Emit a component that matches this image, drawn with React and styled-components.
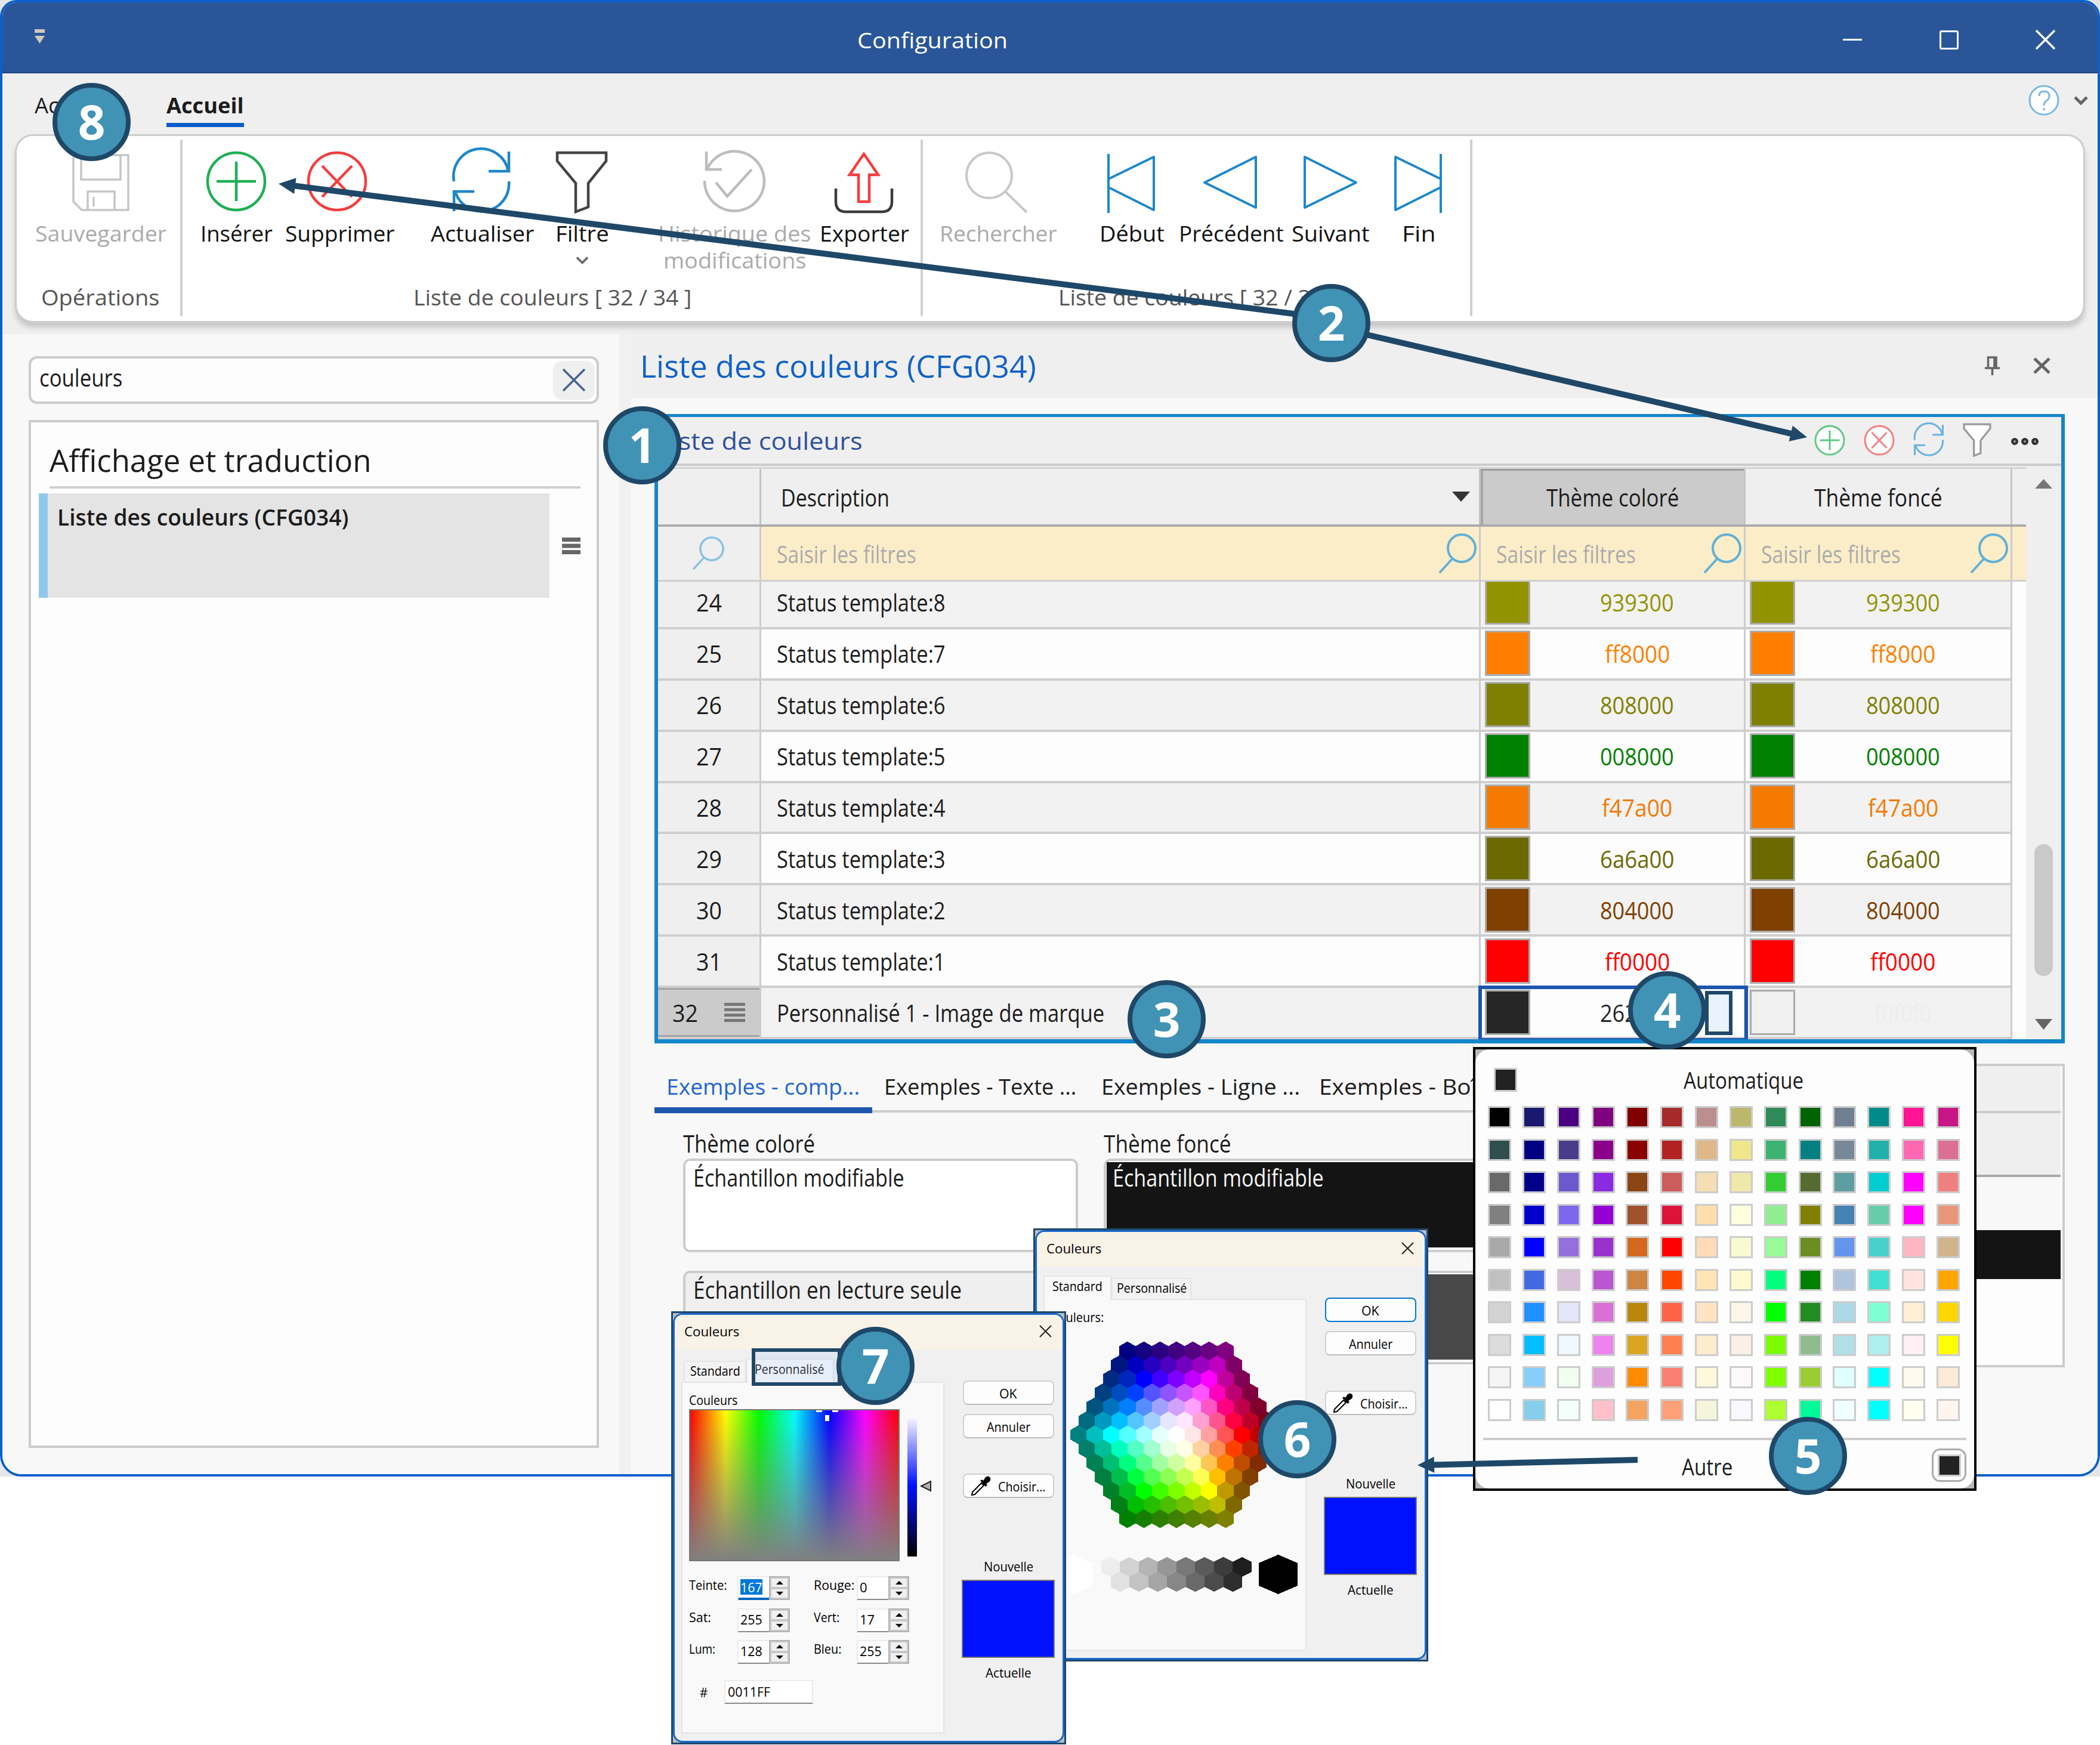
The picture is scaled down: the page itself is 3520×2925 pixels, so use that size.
import React, { useLayoutEffect, useRef, useState } from 'react';
import styled, { createGlobalStyle, css } from 'styled-components';

const GlobalStyle = createGlobalStyle`
  * { box-sizing: border-box; }
  html, body { margin: 0; padding: 0; background: #fff; }
  body { font-family: 'Open Sans', 'Noto Sans', sans-serif; font-size: 36.5px; color: #1c1c1c; }
  svg { display: block; flex: none; overflow: visible; }
`;

const FitBox = styled.span`
  display: inline-block;
  flex: none;
  white-space: nowrap;
`;

const FitInner = styled.span`
  display: inline-block;
  transform-origin: 0 50%;
`;

// Condenses a label so that it takes exactly the given width
const Fit = ({ w, children }) => {
  const ref = useRef(null);
  const [scale, setScale] = useState(1);
  useLayoutEffect(() => {
    setScale(w / ref.current.offsetWidth);
  }, [w, children]);
  return (
    <FitBox style={{ width: w }}>
      <FitInner ref={ref} style={{ transform: `scaleX(${scale})` }}>{children}</FitInner>
    </FitBox>
  );
};

const Page = styled.div`
  position: relative;
  width: 3520px;
  height: 2925px;
  overflow: hidden;
  background: #fff;
`;

const Backdrop = styled.div`
  height: 2475px;
  background: #e6e6e6;
`;

const Window = styled.div`
  display: flex;
  flex-direction: column;
  width: 3520px;
  height: 2475px;
  border: 4px solid #0a60cc;
  border-radius: 28px 28px 36px 36px;
  overflow: hidden;
  background: #efefef;
`;

/* ---------- title bar ---------- */

const TitleBar = styled.div`
  display: flex;
  align-items: center;
  height: 119px;
  flex: none;
  padding: 9px 72px 0 54px;
  background: #2a5699;
  color: #fff;
  border-bottom: 3px solid #22498a;
`;

const QuickAccess = styled.div`
  padding-bottom: 10px;
`;

const TitleText = styled.div`
  flex: 1;
  padding-left: 1361px;
  font-size: 37px;
  line-height: 50px;
`;

const WindowButtons = styled.div`
  display: flex;
  align-items: center;
  gap: 130px;
`;

const MenuTabs = styled.div`
  display: flex;
  height: 102px;
  flex: none;
  padding: 28px 17px 0 54px;
`;

const MenuTab = styled.div`
  height: 62px;
  line-height: 50px;
  margin-right: ${({ gap }) => gap || 0}px;
  ${({ active }) => active && css`
    font-weight: 700;
    border-bottom: 7px solid #0a5cc8;
  `}
`;

const HelpArea = styled.div`
  display: flex;
  align-items: center;
  gap: 25px;
  height: 33px;
  margin-left: auto;
`;

/* ---------- ribbon ---------- */

const Ribbon = styled.div`
  display: flex;
  height: 316px;
  flex: none;
  margin: 0 21px;
  background: #fff;
  border: 3px solid #cdcdcd;
  border-radius: 30px;
  box-shadow: 0 8px 8px #c8c8c8;
`;

const RibbonGroup = styled.div`
  display: flex;
  flex-direction: column;
  width: ${({ w }) => w}px;
  margin: 6px 0 8px;
  padding: 20px 0 9px;
  border-right: 4px solid #d0d0d0;
`;

const RibbonRow = styled.div`
  display: flex;
`;

const RibbonButton = styled.div`
  display: flex;
  flex-direction: column;
  align-items: center;
  width: ${({ w }) => w}px;
  margin-left: ${({ ml }) => ml}px;
  line-height: 45px;
  color: ${({ off }) => (off ? '#ababab' : '#111')};
`;

const RibbonIcon = styled.div`
  height: 115px;
  margin-left: ${({ shift }) => shift || 0}px;
`;

const RibbonCaption = styled.div`
  margin-top: auto;
  padding-left: ${({ pl }) => pl}px;
  line-height: 45px;
  color: #555;
`;

const FilterArrow = styled.div`
  margin-top: 16px;
`;

/* ---------- left pane ---------- */

const Workspace = styled.div`
  display: flex;
  flex: 1;
  margin-top: 19px;
`;

const SidePane = styled.div`
  display: flex;
  flex-direction: column;
  width: 1034px;
  padding: 37px 34px 0 44px;
  background: #f8f8f8;
`;

const SearchField = styled.div`
  display: flex;
  align-items: center;
  justify-content: space-between;
  height: 80px;
  padding: 0 3px 0 14px;
  font-size: 40px;
  background: #fdfdfd;
  border: 4px solid #ccc;
  border-radius: 14px;
`;

const SearchValue = styled.div`
  line-height: 50px;
  padding-bottom: 8px;
`;

const ClearButton = styled.div`
  display: flex;
  align-items: center;
  justify-content: center;
  width: 70px;
  height: 65px;
  border-radius: 16px;
  background: #efefef;
`;

const Tree = styled.div`
  height: 1723px;
  margin-top: 27px;
  padding: 29px 27px 0 13px;
  background: #fdfdfd;
  border: 4px solid #ccc;
`;

const TreeTitle = styled.div`
  margin-left: 18px;
  height: 82px;
  padding-top: 3px;
  font-size: 51px;
  line-height: 62px;
  border-bottom: 4px solid #cfcfcf;
`;

const TreeRow = styled.div`
  display: flex;
  align-items: center;
  justify-content: space-between;
  margin-top: 8px;
`;

const TreeItem = styled.div`
  width: 856px;
  height: 175px;
  padding: 14px 0 0 16px;
  font-size: 38px;
  font-weight: 600;
  line-height: 50px;
  background: #e4e4e4;
  border-left: 15px solid #90c8ec;
`;

const Splitter = styled.div`
  width: 20px;
  background: #f1f1f1;
`;

/* ---------- main pane ---------- */

const MainPane = styled.div`
  display: flex;
  flex-direction: column;
  flex: 1;
  background: #f8f8f8;
`;

const PaneHeader = styled.div`
  display: flex;
  align-items: center;
  height: 107px;
  padding: 0 81px 2px 15px;
  background: #efefef;
  color: #1062c8;
  font-size: 51px;
  line-height: 70px;
`;

const PaneTools = styled.div`
  display: flex;
  align-items: center;
  gap: 58px;
  margin-left: auto;
`;

const GridFrame = styled.div`
  width: 2364px;
  height: 1055px;
  margin: 27px 0 0 39px;
  background: #efefef;
  border: solid #1485cc;
  border-width: 5px 6px 7px 6px;
`;

const GridCaption = styled.div`
  display: flex;
  align-items: center;
  height: 82px;
  padding: 0 39px 0 1px;
  color: #2f519c;
  font-size: 41px;
  line-height: 56px;
  border-bottom: 4px solid #ccc;
`;

const GridTools = styled.div`
  display: flex;
  align-items: center;
  gap: 33px;
  margin-left: auto;
`;

const GridBody = styled.div`
  display: flex;
  height: 961px;
`;

const Sheet = styled.div`
  display: flex;
  flex-direction: column;
  width: 2293px;
  padding-top: 2px;
  font-size: 41px;
`;

const line = css`
  display: grid;
  grid-template-columns: 173px 1206px 444px 447px 23px;
`;

const HeadLine = styled.div`
  ${line}
  height: 100px;
  border-top: 3px solid #d4d4d4;
  border-bottom: 4px solid #acacac;
`;

const HeadCell = styled.div`
  display: flex;
  align-items: center;
  justify-content: ${({ spread }) => (spread ? 'space-between' : 'center')};
  padding: ${({ spread }) => (spread ? '0 15px 0 33px' : '0')};
  border-right: 3px solid #c4c4c4;
  background: ${({ active }) => (active ? '#cbcbcb' : '#efefef')};
  box-shadow: ${({ active }) => (active ? 'inset 0 3px #9a9a9a, inset 4px 0 #a4a4a4' : 'none')};
`;

const FilterLine = styled.div`
  ${line}
  height: 92px;
  border-bottom: 3px solid #cfcfcf;
  background: #fcedc9;
`;

const FilterCell = styled.div`
  display: flex;
  align-items: center;
  justify-content: space-between;
  padding: 0 3px 0 26px;
  color: #ababab;
  border-right: 3px solid #ccc;
`;

const FilterIndex = styled.div`
  display: flex;
  align-items: center;
  justify-content: center;
  background: #efefef;
  border-right: 3px solid #ccc;
`;

const Rows = styled.div`
  display: flex;
  flex-direction: column;
  justify-content: flex-end;
  height: 767px;
  overflow: hidden;
`;

const Row = styled.div`
  ${line}
  height: 85.9px;
  flex: none;
  background: ${({ alt }) => (alt ? '#f2f2f2' : '#fdfdfd')};
`;

const Cell = styled.div`
  display: flex;
  align-items: center;
  padding-left: ${({ pl }) => pl || 0}px;
  padding-bottom: 1px;
  border-right: 3px solid #ccc;
  border-bottom: 4px solid #cfcfcf;
`;

const IndexCell = styled(Cell)`
  justify-content: center;
  gap: 44px;
  background: ${({ active }) => (active ? '#cbcbcb' : '#efefef')};
  box-shadow: ${({ active }) => (active ? 'inset 0 3px #a4a4a4, inset 0 -3px #a4a4a4' : 'none')};
`;

const ColorCell = styled(Cell)`
  padding-left: 7px;
  color: ${({ ink }) => ink};
  ${({ editing }) => editing && css`
    position: relative;
    background: #fdfdfd;
    outline: 6px solid #1c56ae;
    outline-offset: -2px;
  `}
`;

const ColorSwatch = styled.div`
  width: 76px;
  height: 76px;
  flex: none;
  background: ${({ fill }) => fill};
  border: 3px solid #ababab;
`;

const ColorCode = styled.div`
  display: flex;
  flex: 1;
  justify-content: center;
`;

const RowGap = styled.div`
  background: #fdfdfd;
`;

const ScrollBar = styled.div`
  display: flex;
  flex-direction: column;
  align-items: center;
  flex: 1;
  padding: 22px 0 16px;
  background: #efefef;
`;

const Thumb = styled.div`
  width: 31px;
  height: 221px;
  margin: auto 0 72px;
  border-radius: 16px;
  background: #c9c9c9;
`;

/* ---------- samples ---------- */

const Bottom = styled.div`
  display: flex;
  margin-left: 39px;
`;

const Samples = styled.div`
  width: 1403px;
`;

const SampleTabs = styled.div`
  display: flex;
  height: 117px;
  padding-top: 47px;
  background: linear-gradient(#ccc, #ccc) 0 112px / 100% 4px no-repeat;
`;

const SampleTab = styled.div`
  width: 364.5px;
  flex: none;
  padding-left: 20px;
  line-height: 50px;
  white-space: nowrap;
  ${({ active }) => active && css`
    color: #1f66d0;
    border-bottom: 10px solid #1f57ab;
  `}
`;

const SampleColumns = styled.div`
  display: flex;
  gap: 43px;
  padding: 28px 0 0 48px;
  font-size: 40px;
`;

const SampleColumn = styled.div`
  width: 662px;
  flex: none;
`;

const SampleLabel = styled.div`
  height: 48px;
  line-height: 45px;
`;

const SampleArea = styled.div`
  height: 157px;
  margin-bottom: 31px;
  padding: ${({ dark }) => (dark ? '2px 1px 4px' : '0')};
  border: 4px solid #ccc;
  border-radius: 12px;
  background: #fff;
`;

const SampleText = styled.div`
  height: 100%;
  padding: ${({ dark }) => (dark ? '1px 10px' : '3px 13px')};
  line-height: 50px;
  color: ${({ dark }) => (dark ? '#f4f4f4' : '#1c1c1c')};
  background: ${({ fill }) => fill};
  border-radius: ${({ dark }) => (dark ? 0 : 8)}px;
`;

const PreviewBox = styled.div`
  flex: none;
  width: 961px;
  height: 509px;
  margin-top: 34px;
  padding-right: 3px;
  border: 4px solid #ccc;
  background: #fdfdfd;
`;

const PreviewBand = styled.div`
  height: ${({ h }) => h}px;
  background: ${({ fill }) => fill};
  border-bottom: ${({ rule }) => (rule ? `4px solid ${rule}` : 'none')};
`;

/* ---------- colour popup ---------- */

const Popup = styled.div`
  position: absolute;
  left: 2469px;
  top: 1755px;
  width: 844px;
  height: 744px;
  border: 4px solid #000;
  background: #b9b9b9;
`;

const PopupBody = styled.div`
  height: 100%;
  padding: 30px 13px 0;
  border-radius: 24px;
  background: #fdfdfd;
  font-size: 39px;
`;

const PopupAuto = styled.div`
  display: flex;
  align-items: center;
  height: 42px;
  padding-left: 18px;
  margin-bottom: 23px;
  gap: 279px;
  line-height: 42px;
`;

const Chip = styled.div`
  width: 39px;
  height: ${({ h }) => h || 37}px;
  background: ${({ fill }) => fill};
  border: 3px solid #ccc;
`;

const ChipGrid = styled.div`
  display: grid;
  grid-template-columns: repeat(14, 39px);
  grid-auto-rows: 37px;
  column-gap: 18.85px;
  row-gap: 17.5px;
  padding-left: 8px;
`;

const PopupOther = styled.div`
  display: flex;
  align-items: center;
  justify-content: space-between;
  height: 95px;
  margin-top: 28px;
  padding: 0 0 6px 333px;
  border-top: 4px solid #ccc;
`;

const OtherText = styled.div`
  padding-top: 2px;
`;

const OtherButton = styled.div`
  display: flex;
  align-items: center;
  justify-content: center;
  width: 58px;
  height: 56px;
  border: 3px solid #ababab;
  border-radius: 14px;
`;

/* ---------- colour dialogs ---------- */

const DialogFrame = styled.div`
  position: absolute;
  left: ${({ x }) => x}px;
  top: ${({ y }) => y}px;
  width: 662px;
  height: 726px;
  border: 3px solid #1f4868;
  background: #b9bec4;
  font-size: 22px;
  line-height: 28px;
  color: #000;
`;

const Dialog = styled.div`
  display: flex;
  flex-direction: column;
  height: 100%;
  border: 3px solid #1a68cc;
  border-radius: 16px;
  overflow: hidden;
  background: #f0f0f0;
`;

const DialogTitle = styled.div`
  display: flex;
  align-items: center;
  justify-content: space-between;
  height: 58px;
  flex: none;
  padding: 0 19px 4px 16px;
  background: #f9f2e6;
`;

const DialogBody = styled.div`
  display: flex;
`;

const TabSide = styled.div`
  width: 441px;
  margin-left: 11px;
`;

const DialogTabs = styled.div`
  display: flex;
  align-items: flex-end;
  height: 54px;
  padding-left: ${({ pl }) => pl || 0}px;
`;

const DialogTab = styled.div`
  width: ${({ w }) => w}px;
  height: ${({ active }) => (active ? 41 : 35)}px;
  padding-top: ${({ active }) => (active ? 1 : 0)}px;
  padding-left: ${({ pl }) => pl}px;
  background: ${({ active }) => (active ? '#f9f9f9' : '#f3f3f3')};
  border: 2px solid #e5e5e5;
  border-bottom: none;
  margin-bottom: ${({ active }) => (active ? -2 : 0)}px;
  position: relative;
`;

const TabPage = styled.div`
  height: 590px;
  padding: 14px 13px 0 11px;
  background: #f9f9f9;
  border: 2px solid #e5e5e5;
`;

const WheelArea = styled.div`
  padding-top: 7px;
`;

const ActionSide = styled.div`
  display: flex;
  flex-direction: column;
  align-items: center;
  width: 158px;
  margin-left: 28px;
  padding-top: 52px;
`;

const DialogButton = styled.div`
  display: flex;
  align-items: center;
  justify-content: center;
  gap: 12px;
  width: 153px;
  height: 41px;
  margin-bottom: ${({ mb }) => mb}px;
  background: #fdfdfd;
  border: 2px solid ${({ primary }) => (primary ? '#0078d4' : '#d0d0d0')};
  border-bottom-color: ${({ primary }) => (primary ? '#0078d4' : '#bdbdbd')};
  border-radius: 8px;
`;

const NewColor = styled.div`
  width: 156px;
  height: 131px;
  margin: 9px 0 10px;
  background: #0011ff;
  border: 2px solid #7c7c70;
`;

const Spectrum = styled.div`
  width: 353px;
  height: 255px;
  border: 2px solid #777;
  background:
    linear-gradient(rgba(128, 128, 128, 0), rgb(128, 128, 128)),
    linear-gradient(to right, #f00, #ff0 17%, #0f0 33%, #0ff 50%, #00f 67%, #f0f 84%, #f00);
`;

const PickerRow = styled.div`
  display: flex;
  gap: 13px;
  margin-top: 2px;
`;

const LumBar = styled.div`
  width: 25px;
  height: 237px;
  margin-top: 10px;
  background: linear-gradient(#fff, #0011ff 50%, #000);
`;

const Fields = styled.div`
  display: grid;
  grid-template-columns: 81px 128px 72px 1fr;
  grid-auto-rows: 53.6px;
  padding-top: 25px;
`;

const FieldLabel = styled.div`
  padding-top: 0;
`;

const Spin = styled.div`
  display: flex;
  width: 88px;
  height: 40px;
  border: 2px solid #ececec;
  border-bottom-color: #8a8a8a;
  background: #fff;
`;

const SpinValue = styled.div`
  flex: 1;
  padding: 2px 0 0 3px;
  ${({ focused }) => focused && css`
    box-shadow: 0 2px #0067c0, inset 0 -2px #0067c0;
  `}
`;

const Selection = styled.span`
  display: inline-block;
  background: #0078d7;
  color: #fff;
  line-height: 26px;
`;

const SpinButtons = styled.div`
  display: flex;
  flex-direction: column;
  width: 35px;
  margin: -2px;
  border: 2px solid #b4b4b4;
  background: #f0f0f0;
`;

const SpinButton = styled.div`
  display: flex;
  flex: 1;
  align-items: center;
  justify-content: center;
  border: 2px solid #c8c8c8;
`;

const HexRow = styled.div`
  display: flex;
  align-items: center;
  gap: 28px;
  margin-top: 13px;
  padding-left: 18px;
`;

const HexInput = styled.div`
  width: 149px;
  height: 40px;
  padding: 3px 4px 0;
  background: #fff;
  border: 2px solid #ececec;
  border-bottom-color: #8a8a8a;
`;

/* ---------- annotations ---------- */

const Callout = styled.div`
  position: absolute;
  left: ${({ x }) => x - 65}px;
  top: ${({ y }) => y - 65}px;
  display: flex;
  align-items: center;
  justify-content: center;
  width: 131px;
  height: 131px;
  padding-bottom: 3px;
  border: 8px solid #1f4868;
  border-radius: 50%;
  background: #4093b5;
  color: #fff;
  font-size: 80px;
  font-weight: 700;
  line-height: 100px;
`;

const Highlight = styled.div`
  position: absolute;
  left: ${({ x }) => x}px;
  top: ${({ y }) => y}px;
  width: ${({ w }) => w}px;
  height: ${({ h }) => h}px;
  border: 6px solid #1f4868;
  background: ${({ fill }) => fill};
`;

const ArrowLayer = styled.svg`
  position: absolute;
  left: 0;
  top: 0;
`;

/* ---------- icons ---------- */

const blue = '#1f87cc';

const PlusIcon = ({ size = 100, sw = 4.5, color = '#1fb053', fill = 'none' }) => (
  <svg width={size} height={size} viewBox="0 0 100 100" fill="none" stroke={color} strokeWidth={sw}>
    <circle cx="50" cy="50" r="48" fill={fill} />
    <path d="M50 17V83M17 50H83" />
  </svg>
);

const CrossIcon = ({ size = 100, sw = 4.5, color = '#f43e3e', fill = 'none' }) => (
  <svg width={size} height={size} viewBox="0 0 100 100" fill="none" stroke={color} strokeWidth={sw}>
    <circle cx="50" cy="50" r="48" fill={fill} />
    <path d="M25 24L75 76M75 24L25 76" />
  </svg>
);

const RefreshIcon = ({ size = 98, sw = 4.5, color = blue }) => (
  <svg width={size} height={size * 1.02} viewBox="0 0 98 100" fill="none" stroke={color} strokeWidth={sw}>
    <path d="M3 50A46 46 0 0 1 94 33M95 0V33H61M95 50A46 46 0 0 1 5 67M3 100V67H37" />
  </svg>
);

const FunnelIcon = ({ size = 86, sw = 4.5, color = '#444', fill = 'none' }) => (
  <svg width={size} height={(size * 103) / 86} viewBox="0 0 86 103" fill={fill} stroke={color} strokeWidth={sw}>
    <path d="M2 2H84V16L54 53V93L33 101V53L2 16Z" />
  </svg>
);

const SaveIcon = () => (
  <svg width="96" height="104" viewBox="0 -4 96 104" fill="none" stroke="#c6c6c6" strokeWidth="3.500">
    <path d="M2 2H94V94H16L2 80ZM15 2V43H81V2M26 94V63H71V94M36 72V88" />
  </svg>
);

const HistoryIcon = () => (
  <svg width="103" height="104" viewBox="0 0 103 104" fill="none" stroke="#bdbdbd" strokeWidth="4.5">
    <path d="M2 49A50 50 0 1 0 6 30M5 0V30H31M21 52L40 75L81 30" />
  </svg>
);

const ExportIcon = () => (
  <svg width="98" height="104" viewBox="0 0 98 104" fill="none" strokeWidth="4.5">
    <path d="M49 4L73 39H58V84H40V39H25Z" stroke="#f43e3e" />
    <path d="M2 62V84Q2 101 19 101H79Q96 101 96 84V62" stroke="#3c3c3c" />
  </svg>
);

const SearchIcon = () => (
  <svg width="104" height="104" viewBox="0 0 104 104" fill="none" stroke="#c8c8c8" strokeWidth="4">
    <circle cx="40" cy="40" r="38" />
    <path d="M67 67L103 102" />
  </svg>
);

const NavIcon = ({ d, w }) => (
  <svg width={w} height="104" viewBox={`0 0 ${w} 104`} fill="none" stroke={blue} strokeWidth="4" strokeLinejoin="round">
    <path d={d} />
  </svg>
);

const Magnifier = ({ w = 64, h = 66, color = '#62b0d6' }) => (
  <svg width={w} height={h} viewBox="0 0 64 66" fill="none" stroke={color} strokeWidth="4">
    <circle cx="38" cy="24" r="23" />
    <path d="M22 42L1 65" />
  </svg>
);

const Chevron = ({ w = 22, h = 12, sw = 5 }) => (
  <svg width={w} height={h} viewBox="0 0 22 12" fill="none" stroke="#666" strokeWidth={sw}>
    <path d="M1 1L11 11L21 1" />
  </svg>
);

const Triangle = ({ w, h, up, color }) => (
  <svg width={w} height={h} viewBox="0 0 10 10" preserveAspectRatio="none">
    <path d={up ? 'M0 10L5 0L10 10Z' : 'M0 0H10L5 10Z'} fill={color} />
  </svg>
);

const XMark = ({ w, h, color, sw }) => (
  <svg width={w} height={h} viewBox={`0 0 ${w} ${h}`} stroke={color} strokeWidth={sw}>
    <path d={`M0 0L${w} ${h}M${w} 0L0 ${h}`} />
  </svg>
);

const Bars = ({ w, ys, th, color = '#666' }) => (
  <svg width={w} height={ys[ys.length - 1] + th}>
    {ys.map((y) => <rect key={y} y={y} width={w} height={th} fill={color} />)}
  </svg>
);

const Pipette = () => (
  <svg width="34" height="34" viewBox="0 0 34 34">
    <path d="M2 32L3 27L18 12L22 16L7 31Z" fill="#fff" stroke="#000" strokeWidth="2" />
    <path d="M16 8L19 6L21 8L25 2Q29 -1 32 2Q35 6 31 10L26 13L28 15L25 18Z" fill="#000" />
  </svg>
);

const HelpIcon = () => (
  <svg width="52" height="52" viewBox="0 0 52 52" fill="none" stroke="#7abbe2" strokeWidth="3">
    <circle cx="26" cy="26" r="24" fill="#fff" />
    <path d="M18 19Q18 11 26 11Q35 11 35 19Q35 24 30 27Q26 30 26 35M26 39V43" />
  </svg>
);

/* ---------- hexagon colour wheel ---------- */

const CORNERS = [[0, 0, 255], [255, 0, 255], [255, 0, 0], [255, 255, 0], [0, 255, 0], [0, 255, 255]];
const ANGLES = [120, 60, 0, -60, -120, 180];
const TINT = [1, 0.9, 0.63, 0.33, 0];

const hexPoints = (cx, cy, w, h, shoulder = h / 4) =>
  [[0, -h / 2], [w / 2, -h / 2 + shoulder], [w / 2, h / 2 - shoulder], [0, h / 2], [-w / 2, h / 2 - shoulder], [-w / 2, -h / 2 + shoulder]]
    .map(([x, y]) => `${cx + x},${cy + y}`)
    .join(' ');

const ringColor = (ring, rgb) => {
  const k = ring === 6 ? 0.5 : ring === 5 ? 0.75 : 1;
  const t = ring < 4 ? TINT[ring] : 0;
  return `rgb(${rgb.map((c) => Math.round((c + (255 - c) * t) * k)).join(',')})`;
};

const wheel = [{ x: 0, y: 0, fill: '#fff' }];
for (let ring = 1; ring <= 6; ring++) {
  for (let side = 0; side < 6; side++) {
    const next = (side + 1) % 6;
    const at = (k) => {
      const a = (ANGLES[k] * Math.PI) / 180;
      return [ring * 27.4 * Math.cos(a), (-ring * 23.45 * Math.sin(a)) / Math.sin(Math.PI / 3)];
    };
    const [x1, y1] = at(side);
    const [x2, y2] = at(next);
    for (let i = 0; i < ring; i++) {
      const f = i / ring;
      const rgb = CORNERS[side].map((c, n) => c + (CORNERS[next][n] - c) * f);
      wheel.push({ x: x1 + (x2 - x1) * f, y: y1 + (y2 - y1) * f, fill: ringColor(ring, rgb) });
    }
  }
}

const GRAYS_TOP = ['#ededed', '#d2d2d2', '#b4b4b4', '#969696', '#787878', '#5a5a5a', '#3c3c3c', '#1e1e1e'];
const GRAYS_LOW = ['#e1e1e1', '#c3c3c3', '#a5a5a5', '#878787', '#696969', '#4b4b4b', '#2d2d2d'];

const HexWheel = () => (
  <svg width="412" height="480" viewBox="0 0 412 480" shapeRendering="crispEdges">
    {wheel.map(({ x, y, fill }, i) => (
      <polygon key={i} points={hexPoints(210 + x, 177 + y, 27.6, 31.4)} fill={fill} />
    ))}
    <polygon points={hexPoints(37, 411, 65, 66, 14)} fill="#fff" />
    {GRAYS_TOP.map((c, i) => <polygon key={c} points={hexPoints(99.5 + i * 31.5, 398.5, 31.7, 33.5, 8)} fill={c} />)}
    {GRAYS_LOW.map((c, i) => <polygon key={c} points={hexPoints(115.5 + i * 31.5, 423.5, 31.7, 33.5, 8)} fill={c} />)}
    <polygon points={hexPoints(380.5, 411, 65, 66, 14)} fill="#000" />
  </svg>
);

/* ---------- data ---------- */

const ROWS = [
  { n: 24, name: 'Status template:8', color: '939300', w: 124 },
  { n: 25, name: 'Status template:7', color: 'ff8000', w: 109 },
  { n: 26, name: 'Status template:6', color: '808000', w: 124 },
  { n: 27, name: 'Status template:5', color: '008000', w: 124 },
  { n: 28, name: 'Status template:4', color: 'f47a00', w: 118 },
  { n: 29, name: 'Status template:3', color: '6a6a00', w: 124 },
  { n: 30, name: 'Status template:2', color: '804000', w: 124 },
  { n: 31, name: 'Status template:1', color: 'ff0000', w: 109 },
];

const PALETTE = `
black midnightblue indigo purple maroon brown rosybrown darkkhaki seagreen darkgreen slategray darkcyan deeppink mediumvioletred
darkslategray navy darkslateblue darkmagenta darkred firebrick burlywood khaki mediumseagreen teal lightslategray lightseagreen hotpink palevioletred
dimgray darkblue slateblue blueviolet saddlebrown indianred wheat palegoldenrod limegreen darkolivegreen cadetblue darkturquoise fuchsia lightcoral
gray mediumblue mediumslateblue darkviolet sienna crimson navajowhite lightyellow lightgreen olive steelblue mediumaquamarine magenta darksalmon
darkgray blue mediumpurple darkorchid chocolate red peachpuff lightgoldenrodyellow palegreen olivedrab cornflowerblue mediumturquoise lightpink tan
silver royalblue thistle mediumorchid peru orangered moccasin lemonchiffon springgreen green lightsteelblue turquoise mistyrose orange
lightgray dodgerblue lavender orchid darkgoldenrod tomato bisque oldlace lime forestgreen lightblue aquamarine papayawhip gold
gainsboro deepskyblue aliceblue violet goldenrod coral blanchedalmond linen lawngreen darkseagreen powderblue paleturquoise lavenderblush yellow
whitesmoke lightskyblue honeydew plum darkorange salmon cornsilk snow chartreuse yellowgreen lightcyan aqua floralwhite antiquewhite
white skyblue mintcream pink sandybrown lightsalmon beige ghostwhite greenyellow mediumspringgreen azure cyan ivory seashell
`.trim().split(/\s+/);

const CALLOUTS = [
  [1, 1076, 746], [2, 2231, 541], [3, 1955, 1708], [4, 2794, 1693],
  [5, 3030, 2440], [6, 2174, 2412], [7, 1467, 2289], [8, 153, 204],
];

/* ---------- parts ---------- */

const Tool = ({ icon, label, w, ml, off, shift, children }) => (
  <RibbonButton w={w} ml={ml} off={off}>
    <RibbonIcon shift={shift}>{icon}</RibbonIcon>
    <Fit w={w}>{label}</Fit>
    {children}
  </RibbonButton>
);

const RibbonBar = () => (
  <Ribbon>
    <RibbonGroup w={278}>
      <RibbonRow>
        <Tool icon={<SaveIcon />} label="Sauvegarder" w={220} ml={31} off />
      </RibbonRow>
      <RibbonCaption pl={41}><Fit w={198}>Opérations</Fit></RibbonCaption>
    </RibbonGroup>
    <RibbonGroup w={1241}>
      <RibbonRow>
        <Tool icon={<PlusIcon />} label="Insérer" w={121} ml={30} shift={-1} />
        <Tool icon={<CrossIcon />} label="Supprimer" w={183} ml={21} shift={-10} />
        <Tool icon={<RefreshIcon />} label="Actualiser" w={173} ml={61} shift={-4} />
        <Tool icon={<FunnelIcon />} label="Filtre" w={90} ml={36} shift={-2}>
          <FilterArrow><Chevron w={20} sw={4} /></FilterArrow>
        </Tool>
        <RibbonButton w={257} ml={82} off>
          <RibbonIcon shift={-2}><HistoryIcon /></RibbonIcon>
          <Fit w={257}>Historique des</Fit>
          <Fit w={240}>modifications</Fit>
        </RibbonButton>
        <Tool icon={<ExportIcon />} label="Exporter" w={150} ml={14} shift={-3} />
      </RibbonRow>
      <RibbonCaption pl={387}><Fit w={466}>Liste de couleurs [ 32 / 34 ]</Fit></RibbonCaption>
    </RibbonGroup>
    <RibbonGroup w={921}>
      <RibbonRow>
        <Tool icon={<SearchIcon />} label="Rechercher" w={197} ml={28} off shift={-8} />
        <Tool icon={<NavIcon w={80} d="M2 4V103M78 9V98L2 60V46Z" />} label="Début" w={109} ml={71} shift={-4} />
        <Tool icon={<NavIcon w={90} d="M88 9V94L2 52Z" />} label="Précédent" w={176} ml={24} shift={-4} />
        <Tool icon={<NavIcon w={90} d="M2 9V94L88 52Z" />} label="Suivant" w={131} ml={13} shift={-2} />
        <Tool icon={<NavIcon w={80} d="M78 4V103M2 9V98L78 60V46Z" />} label="Fin" w={56} ml={54} shift={-3} />
      </RibbonRow>
      <RibbonCaption pl={227}><Fit w={466}>Liste de couleurs [ 32 / 34 ]</Fit></RibbonCaption>
    </RibbonGroup>
  </Ribbon>
);

const ColorGrid = () => (
  <GridFrame>
    <GridCaption>
      <Fit w={342}>Liste de couleurs</Fit>
      <GridTools>
        <PlusIcon size={50} color="#5fc886" sw={6} fill="#fff" />
        <CrossIcon size={50} color="#f58080" sw={6} fill="#fff" />
        <RefreshIcon size={50} color="#6cb2de" sw={6} />
        <FunnelIcon size={46} color="#999" sw={6} fill="#fff" />
        <svg width="46" height="14" viewBox="0 -2 46 14" fill="#999" stroke="#333" strokeWidth="4">
          <circle cx="7" cy="7" r="4" />
          <circle cx="24" cy="7" r="4" />
          <circle cx="41" cy="7" r="4" />
        </svg>
      </GridTools>
    </GridCaption>
    <GridBody>
      <Sheet>
        <HeadLine>
          <HeadCell />
          <HeadCell spread>
            <Fit w={182}>Description</Fit>
            <Triangle w={30} h={17} color="#333" />
          </HeadCell>
          <HeadCell active><Fit w={222}>Thème coloré</Fit></HeadCell>
          <HeadCell><Fit w={215}>Thème foncé</Fit></HeadCell>
        </HeadLine>
        <FilterLine>
          <FilterIndex><Magnifier w={54} h={55} color="#84c0e4" /></FilterIndex>
          <FilterCell><Fit w={234}>Saisir les filtres</Fit><Magnifier /></FilterCell>
          <FilterCell><Fit w={234}>Saisir les filtres</Fit><Magnifier /></FilterCell>
          <FilterCell><Fit w={234}>Saisir les filtres</Fit><Magnifier /></FilterCell>
        </FilterLine>
        <Rows>
          {ROWS.map((r, i) => (
            <Row key={r.n} alt={i % 2 === 0}>
              <IndexCell><Fit w={43}>{r.n}</Fit></IndexCell>
              <Cell pl={26}><Fit w={283}>{r.name}</Fit></Cell>
              <ColorCell ink={`#${r.color}`}>
                <ColorSwatch fill={`#${r.color}`} />
                <ColorCode><Fit w={r.w}>{r.color}</Fit></ColorCode>
              </ColorCell>
              <ColorCell ink={`#${r.color}`}>
                <ColorSwatch fill={`#${r.color}`} />
                <ColorCode><Fit w={r.w}>{r.color}</Fit></ColorCode>
              </ColorCell>
              <RowGap />
            </Row>
          ))}
          <Row alt>
            <IndexCell active>
              <Fit w={43}>32</Fit>
              <Bars w={35} ys={[0, 9, 18, 27]} th={5} color="#777" />
            </IndexCell>
            <Cell pl={26}><Fit w={549}>Personnalisé 1 - Image de marque</Fit></Cell>
            <ColorCell editing ink="#262626">
              <ColorSwatch fill="#262626" />
              <ColorCode><Fit w={124}>262626</Fit></ColorCode>
            </ColorCell>
            <ColorCell ink="#ededed">
              <ColorSwatch fill="#f0f0f0" />
              <ColorCode><Fit w={96}>f0f0f0</Fit></ColorCode>
            </ColorCell>
            <RowGap />
          </Row>
        </Rows>
      </Sheet>
      <ScrollBar>
        <Triangle w={29} h={16} up color="#777" />
        <Thumb />
        <Triangle w={29} h={18} color="#666" />
      </ScrollBar>
    </GridBody>
  </GridFrame>
);

const SampleSection = () => (
  <Bottom>
    <Samples>
      <SampleTabs>
        <SampleTab active><Fit w={324}>Exemples - comp...</Fit></SampleTab>
        <SampleTab><Fit w={322}>Exemples - Texte ...</Fit></SampleTab>
        <SampleTab><Fit w={333}>Exemples - Ligne ...</Fit></SampleTab>
        <SampleTab><Fit w={300}>Exemples - Boîte</Fit></SampleTab>
      </SampleTabs>
      <SampleColumns>
        <SampleColumn>
          <SampleLabel><Fit w={221}>Thème coloré</Fit></SampleLabel>
          <SampleArea><SampleText fill="#fff"><Fit w={354}>Échantillon modifiable</Fit></SampleText></SampleArea>
          <SampleArea><SampleText fill="#efefef"><Fit w={450}>Échantillon en lecture seule</Fit></SampleText></SampleArea>
        </SampleColumn>
        <SampleColumn>
          <SampleLabel><Fit w={214}>Thème foncé</Fit></SampleLabel>
          <SampleArea dark><SampleText dark fill="#141414"><Fit w={354}>Échantillon modifiable</Fit></SampleText></SampleArea>
          <SampleArea dark><SampleText dark fill="#484848" /></SampleArea>
        </SampleColumn>
      </SampleColumns>
    </Samples>
    <PreviewBox>
      <PreviewBand h={79} fill="#efefef" rule="#ccc" />
      <PreviewBand h={107} fill="#efefef" rule="#aaa" />
      <PreviewBand h={89} fill="#f8f8f8" />
      <PreviewBand h={82} fill="#141414" />
    </PreviewBox>
  </Bottom>
);

const PalettePopup = () => (
  <Popup>
    <PopupBody>
      <PopupAuto>
        <Chip h={40} fill="#222" />
        <Fit w={201}>Automatique</Fit>
      </PopupAuto>
      <ChipGrid>
        {PALETTE.map((c, i) => <Chip key={i} fill={c} />)}
      </ChipGrid>
      <PopupOther>
        <OtherText><Fit w={85}>Autre</Fit></OtherText>
        <OtherButton><Chip fill="#222" /></OtherButton>
      </PopupOther>
    </PopupBody>
  </Popup>
);

const DialogActions = ({ primary }) => (
  <ActionSide>
    <DialogButton mb={15} primary={primary}><Fit w={30}>OK</Fit></DialogButton>
    <DialogButton mb={59}><Fit w={73}>Annuler</Fit></DialogButton>
    <DialogButton mb={100}><Pipette /><Fit w={80}>Choisir...</Fit></DialogButton>
    <Fit w={83}>Nouvelle</Fit>
    <NewColor />
    <Fit w={77}>Actuelle</Fit>
  </ActionSide>
);

const StandardDialog = () => (
  <DialogFrame x={1732} y={2059}>
    <Dialog>
      <DialogTitle><Fit w={92}>Couleurs</Fit><XMark w={19} h={19} color="#222" sw={2} /></DialogTitle>
      <DialogBody>
        <TabSide>
          <DialogTabs>
            <DialogTab active w={114} pl={13}><Fit w={84}>Standard</Fit></DialogTab>
            <DialogTab w={134} pl={7}><Fit w={117}>Personnalisé</Fit></DialogTab>
          </DialogTabs>
          <TabPage>
            <Fit w={88}>Couleurs:</Fit>
            <WheelArea><HexWheel /></WheelArea>
          </TabPage>
        </TabSide>
        <DialogActions primary />
      </DialogBody>
    </Dialog>
  </DialogFrame>
);

const SpinBox = ({ children, w, focused }) => (
  <Spin>
    <SpinValue focused={focused}>
      {focused ? <Selection><Fit w={w}>{children}</Fit></Selection> : <Fit w={w}>{children}</Fit>}
    </SpinValue>
    <SpinButtons>
      <SpinButton><Triangle w={12} h={6} up color="#000" /></SpinButton>
      <SpinButton><Triangle w={12} h={6} color="#000" /></SpinButton>
    </SpinButtons>
  </Spin>
);

const CustomDialog = () => (
  <DialogFrame x={1125} y={2198}>
    <Dialog>
      <DialogTitle><Fit w={92}>Couleurs</Fit><XMark w={19} h={19} color="#222" sw={2} /></DialogTitle>
      <DialogBody>
        <TabSide>
          <DialogTabs pl={4}>
            <DialogTab w={105} pl={9}><Fit w={84}>Standard</Fit></DialogTab>
            <DialogTab active w={147} pl={12}><Fit w={116}>Personnalisé</Fit></DialogTab>
          </DialogTabs>
          <TabPage>
            <Fit w={81}>Couleurs</Fit>
            <PickerRow>
              <Spectrum>
                <svg width="349" height="251" fill="#fff">
                  <rect x="211" y="0" width="10" height="3" />
                  <rect x="238" y="0" width="10" height="3" />
                  <rect x="226" y="8" width="7" height="10" />
                </svg>
              </Spectrum>
              <LumBar />
              <svg width="18" height="255">
                <path d="M-6 129L10 121V137Z" fill="#b0b0b0" stroke="#222" strokeWidth="2" />
              </svg>
            </PickerRow>
            <Fields>
              <FieldLabel><Fit w={64}>Teinte:</Fit></FieldLabel>
              <SpinBox w={37} focused>167</SpinBox>
              <FieldLabel><Fit w={68}>Rouge:</Fit></FieldLabel>
              <SpinBox w={13}>0</SpinBox>
              <FieldLabel><Fit w={37}>Sat:</Fit></FieldLabel>
              <SpinBox w={37}>255</SpinBox>
              <FieldLabel><Fit w={43}>Vert:</Fit></FieldLabel>
              <SpinBox w={25}>17</SpinBox>
              <FieldLabel><Fit w={44}>Lum:</Fit></FieldLabel>
              <SpinBox w={37}>128</SpinBox>
              <FieldLabel><Fit w={46}>Bleu:</Fit></FieldLabel>
              <SpinBox w={37}>255</SpinBox>
            </Fields>
            <HexRow>
              <Fit w={13}>#</Fit>
              <HexInput><Fit w={71}>0011FF</Fit></HexInput>
            </HexRow>
          </TabPage>
        </TabSide>
        <DialogActions />
      </DialogBody>
    </Dialog>
  </DialogFrame>
);

const Arrow = ({ x1, y1, x2, y2 }) => {
  const angle = (Math.atan2(y2 - y1, x2 - x1) * 180) / Math.PI;
  const len = Math.hypot(x2 - x1, y2 - y1);
  return (
    <g transform={`translate(${x1} ${y1}) rotate(${angle})`} fill="#1f4868">
      <rect y="-5" width={len - 24} height="10" />
      <path d={`M${len} 0L${len - 28} -13.5V13.5Z`} />
    </g>
  );
};

const App = () => (
  <Page>
    <GlobalStyle />
    <Backdrop>
      <Window>
        <TitleBar>
          <QuickAccess>
            <svg width="18" height="26" fill="#cfc8c0">
              <rect width="17" height="6" />
              <path d="M0 11H17L8.500 24Z" />
            </svg>
          </QuickAccess>
          <TitleText><Fit w={252}>Configuration</Fit></TitleText>
          <WindowButtons>
            <svg width="32" height="4"><rect width="32" height="3" fill="#fff" /></svg>
            <svg width="32" height="32" fill="none" stroke="#fff" strokeWidth="3"><rect x="1.500" y="1.500" width="29" height="29" rx="2" /></svg>
            <XMark w={31} h={31} color="#fff" sw={3.5} />
          </WindowButtons>
        </TitleBar>
        <MenuTabs>
          <MenuTab gap={96}><Fit w={125}>Actions</Fit></MenuTab>
          <MenuTab active><Fit w={130}>Accueil</Fit></MenuTab>
          <HelpArea>
            <HelpIcon />
            <Chevron />
          </HelpArea>
        </MenuTabs>
        <RibbonBar />
        <Workspace>
          <SidePane>
            <SearchField>
              <SearchValue><Fit w={139}>couleurs</Fit></SearchValue>
              <ClearButton><XMark w={36} h={36} color="#47628f" sw={3.5} /></ClearButton>
            </SearchField>
            <Tree>
              <TreeTitle><Fit w={539}>Affichage et traduction</Fit></TreeTitle>
              <TreeRow>
                <TreeItem><Fit w={488}>Liste des couleurs (CFG034)</Fit></TreeItem>
                <Bars w={31} ys={[0, 10.5, 21]} th={7} />
              </TreeRow>
            </Tree>
          </SidePane>
          <Splitter />
          <MainPane>
            <PaneHeader>
              <Fit w={664}>Liste des couleurs (CFG034)</Fit>
              <PaneTools>
                <svg width="25" height="32" fill="none" stroke="#666" strokeWidth="3.500">
                  <path d="M5.500 20V2H19V20M0 20H25M12.500 20V32M16 2V20" />
                </svg>
                <XMark w={25} h={24} color="#666" sw={5} />
              </PaneTools>
            </PaneHeader>
            <ColorGrid />
            <SampleSection />
          </MainPane>
        </Workspace>
      </Window>
    </Backdrop>
    <PalettePopup />
    <StandardDialog />
    <CustomDialog />
    <Highlight x={2858} y={1661} w={46} h={74} fill="#eaf3fc" />
    <Highlight x={1260} y={2260} w={150} h={63} fill="rgba(170, 200, 240, 0.22)" />
    <ArrowLayer width="3520" height="2925">
      <Arrow x1={2231} y1={534} x2={467} y2={308} />
      <Arrow x1={2231} y1={547} x2={3029} y2={733} />
      <Arrow x1={2745} y1={2447} x2={2376} y2={2456} />
    </ArrowLayer>
    {CALLOUTS.map(([n, x, y]) => <Callout key={n} x={x} y={y}>{n}</Callout>)}
  </Page>
);

export default App;
